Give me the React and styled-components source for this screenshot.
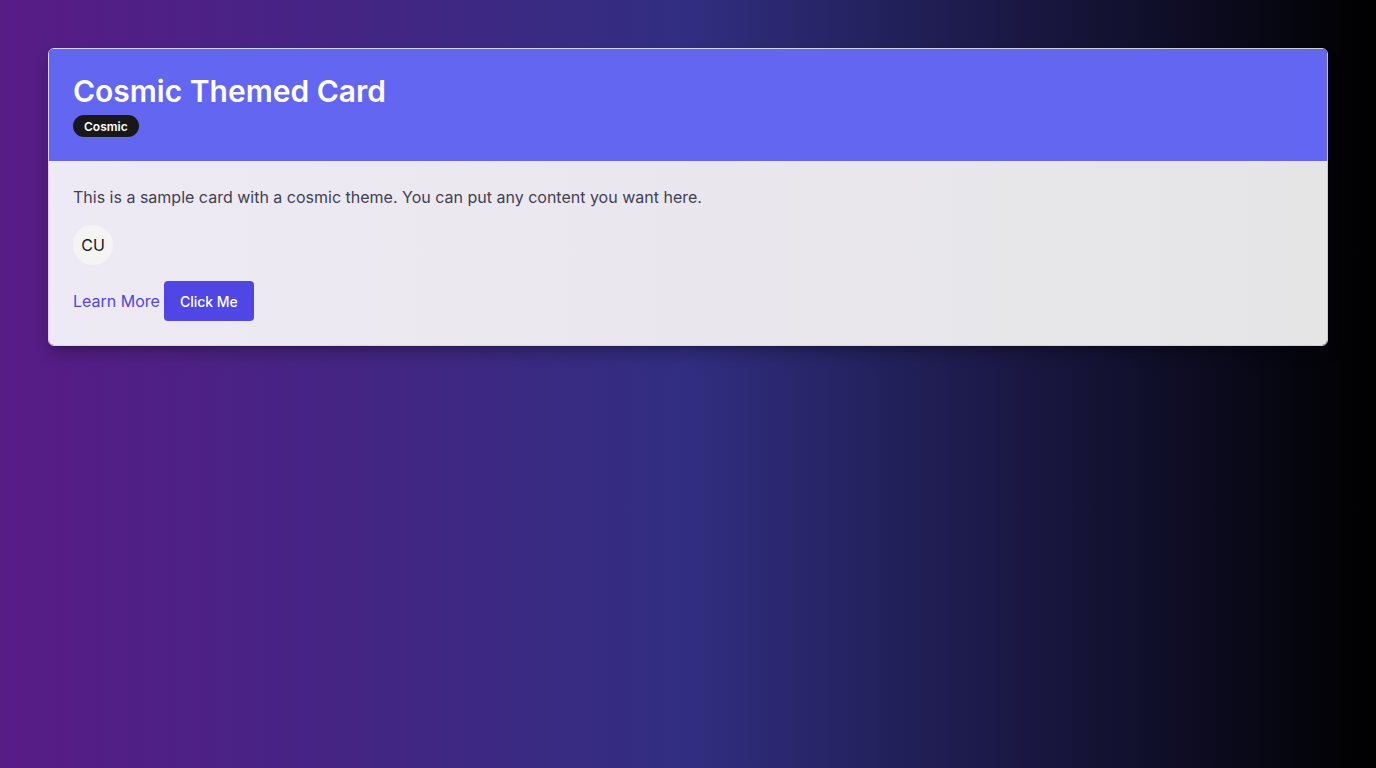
import React from "react";
import styled, { createGlobalStyle } from "styled-components";

const Global = createGlobalStyle`
  html, body { margin: 0; padding: 0; }
  body {
    font-family: Inter, "Noto Sans", sans-serif;
    min-height: 100vh;
    background: linear-gradient(to right, #581c87, #312e81 50%, #000000);
  }
  * { box-sizing: border-box; }
`;

const Page = styled.div`
  min-height: 100vh;
  padding: 48px;
`;

const Card = styled.div`
  border: 1px solid rgba(255, 255, 255, 0.8);
  border-radius: 6px;
  overflow: hidden;
  box-shadow: 0 10px 15px -3px rgba(0, 0, 0, 0.25), 0 4px 6px -4px rgba(0, 0, 0, 0.2);
`;

const Header = styled.div`
  background: #6366f1;
  padding: 24px;
  display: flex;
  flex-direction: column;
  align-items: flex-start;
  gap: 6px;
`;

const Title = styled.h2`
  margin: 0;
  font-size: 30px;
  line-height: 36px;
  font-weight: 600;
  color: #ffffff;
`;

const Badge = styled.span`
  display: inline-flex;
  align-items: center;
  height: 22px;
  padding: 0 11px;
  border-radius: 999px;
  background: #18181b;
  color: #ffffff;
  font-size: 12px;
  font-weight: 600;
`;

const Body = styled.div`
  background: linear-gradient(to right, #eeeaf5, #e5e5e6);
  padding: 24px;
  display: flex;
  flex-direction: column;
  align-items: flex-start;
  gap: 16px;
`;

const Text = styled.p`
  margin: 0;
  font-size: 16px;
  line-height: 24px;
  color: #3f3f55;
`;

const Avatar = styled.div`
  width: 40px;
  height: 40px;
  border-radius: 50%;
  background: #f4f4f5;
  display: flex;
  align-items: center;
  justify-content: center;
  font-size: 16px;
  color: #18181b;
`;

const Actions = styled.div`
  display: flex;
  align-items: center;
  gap: 4px;
`;

const Link = styled.a`
  font-size: 16px;
  line-height: 24px;
  color: #4f46e5;
  text-decoration: none;
  cursor: pointer;
`;

const Button = styled.button`
  height: 40px;
  padding: 0 16px;
  border: none;
  border-radius: 4px;
  background: #4f46e5;
  color: #ffffff;
  font-family: inherit;
  font-size: 14px;
  font-weight: 500;
  cursor: pointer;
`;

export default function App() {
  return (
    <>
      <Global />
      <Page>
        <Card>
          <Header>
            <Title>Cosmic Themed Card</Title>
            <Badge>Cosmic</Badge>
          </Header>
          <Body>
            <Text>This is a sample card with a cosmic theme. You can put any content you want here.</Text>
            <Avatar>CU</Avatar>
            <Actions>
              <Link>Learn More</Link>
              <Button>Click Me</Button>
            </Actions>
          </Body>
        </Card>
      </Page>
    </>
  );
}
